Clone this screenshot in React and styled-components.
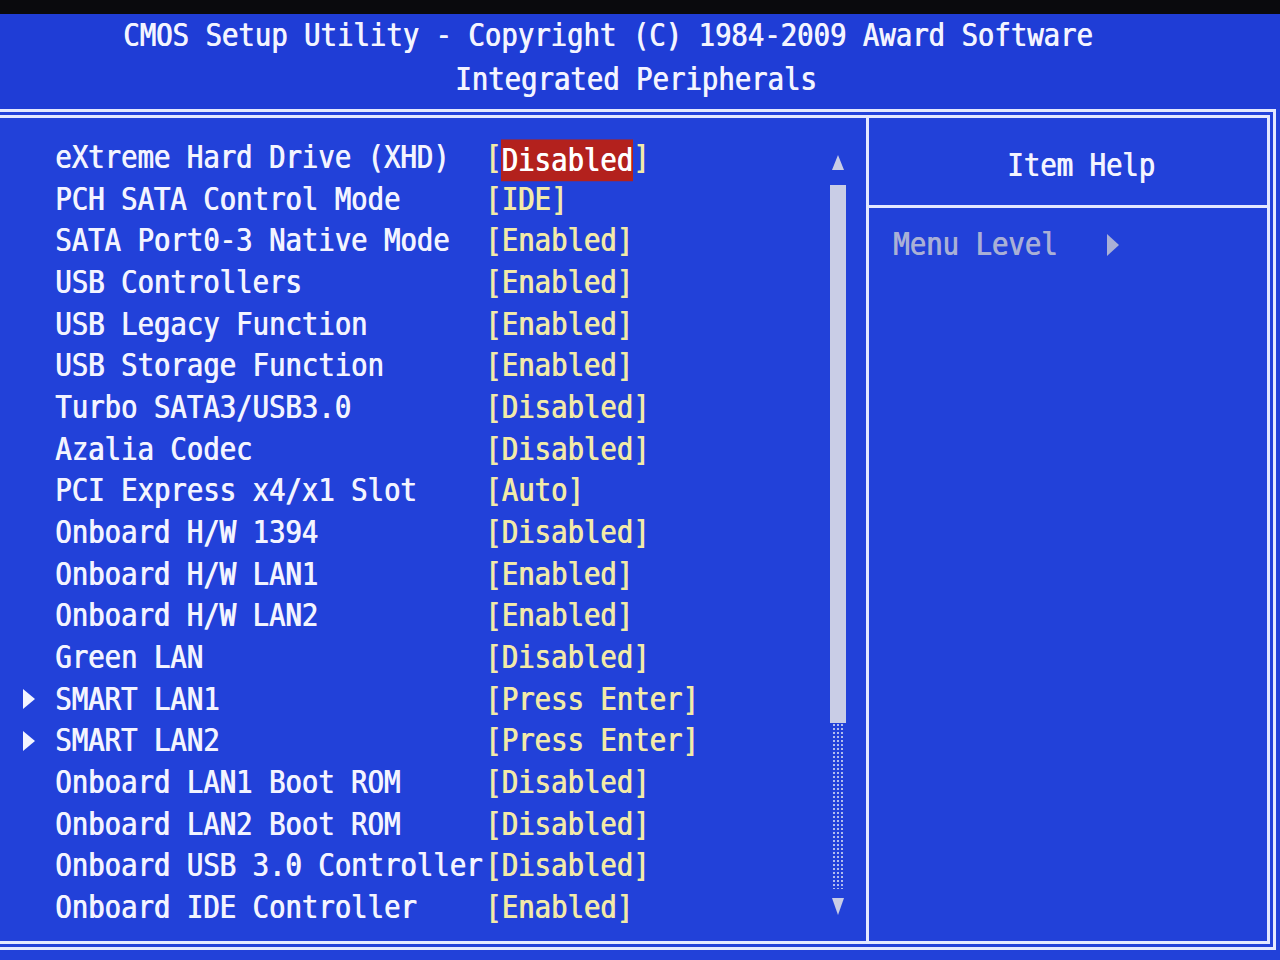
import styled, { createGlobalStyle } from 'styled-components';

const GlobalStyle = createGlobalStyle`
  html, body {
    margin: 0;
    padding: 0;
    background: #050507;
  }
  body {
    font-family: 'DejaVu Sans Mono', 'Liberation Mono', monospace;
  }
`;

const Screen = styled.div`
  width: 1280px;
  height: 960px;
  display: flex;
  flex-direction: column;
  overflow: hidden;
  background: #2241d9;
  font-family: 'DejaVu Sans Mono', 'Liberation Mono', monospace;
  font-size: 27.3px;
  font-weight: normal;
`;

const Bezel = styled.div`
  flex: none;
  height: 14px;
  background: #0a0a0d;
`;

const Header = styled.header`
  flex: none;
  height: 95px;
  display: flex;
  flex-direction: column;
  box-sizing: border-box;
  background: #1f3dd6;
`;

const TitleLine = styled.div`
  height: 44px;
  line-height: 44px;
  padding-left: ${(p) => p.$indent}px;
`;

const Glyphs = styled.span`
  display: inline-block;
  white-space: pre;
  transform: scaleY(1.16);
  color: ${(p) => (p.$tone === 'value' ? '#f2eaa8' : p.$tone === 'dim' ? '#a9b0d6' : '#f3f4ff')};
  text-shadow: 0.8px 0 0 currentColor;
`;

const Frame = styled.main`
  flex: 1;
  display: flex;
  margin-right: 4px;
  margin-bottom: 10px;
  border: 9px double #e4e8ff;
  border-left: none;
`;

const ListPanel = styled.section`
  flex: 0 0 866px;
  display: flex;
  border-right: 3px solid #e4e8ff;
`;

const List = styled.div`
  flex: 1;
  padding-top: 19px;
`;

const Row = styled.div`
  height: 41.67px;
  line-height: 41.67px;
  display: grid;
  grid-template-columns: 55px 430px 1fr;
  align-items: center;
`;

const Pointer = styled.span`
  display: flex;
  align-items: center;
  padding-left: 23px;
`;

const Selected = styled.span`
  display: inline-block;
  height: 36px;
  line-height: 36px;
  vertical-align: middle;
  background: #b3211d;
  color: #ffffff;
`;

const ScrollBar = styled.div`
  flex: 0 0 16px;
  margin-right: 20px;
  padding-top: 37px;
  display: flex;
  flex-direction: column;
  align-items: center;
`;

const Thumb = styled.div`
  width: 16px;
  height: 538px;
  margin-top: 15px;
  background: #c9cde6;
`;

const Track = styled.div`
  width: 12px;
  height: 166px;
  margin-bottom: 9px;
  background-image: radial-gradient(circle, rgba(214, 220, 245, 0.8) 1px, transparent 1.4px);
  background-size: 4px 4px;
`;

const HelpPanel = styled.aside`
  flex: 1;
  display: flex;
  flex-direction: column;
`;

const HelpHeader = styled.div`
  height: 90px;
  display: flex;
  align-items: center;
  justify-content: center;
  box-sizing: border-box;
  border-bottom: 3px solid #e4e8ff;
  padding: 6px 0 0 26px;
`;

const HelpBody = styled.div`
  padding: 16px 0 0 24px;
  line-height: 42px;
  display: flex;
  align-items: center;
`;

const Triangle = ({ dir = 'right', color = '#f3f4ff', w = 12, h = 20 }) => {
  const pts = {
    right: `0,0 ${w},${h / 2} 0,${h}`,
    up: `${w / 2},0 ${w},${h} 0,${h}`,
    down: `0,0 ${w},0 ${w / 2},${h}`,
  }[dir];
  return (
    <svg width={w} height={h} viewBox={`0 0 ${w} ${h}`} style={{ display: 'block' }}>
      <polygon points={pts} fill={color} />
    </svg>
  );
};

const items = [
  { label: 'eXtreme Hard Drive (XHD)', value: 'Disabled', selected: true },
  { label: 'PCH SATA Control Mode', value: 'IDE' },
  { label: 'SATA Port0-3 Native Mode', value: 'Enabled' },
  { label: 'USB Controllers', value: 'Enabled' },
  { label: 'USB Legacy Function', value: 'Enabled' },
  { label: 'USB Storage Function', value: 'Enabled' },
  { label: 'Turbo SATA3/USB3.0', value: 'Disabled' },
  { label: 'Azalia Codec', value: 'Disabled' },
  { label: 'PCI Express x4/x1 Slot', value: 'Auto' },
  { label: 'Onboard H/W 1394', value: 'Disabled' },
  { label: 'Onboard H/W LAN1', value: 'Enabled' },
  { label: 'Onboard H/W LAN2', value: 'Enabled' },
  { label: 'Green LAN', value: 'Disabled' },
  { label: 'SMART LAN1', value: 'Press Enter', submenu: true },
  { label: 'SMART LAN2', value: 'Press Enter', submenu: true },
  { label: 'Onboard LAN1 Boot ROM', value: 'Disabled' },
  { label: 'Onboard LAN2 Boot ROM', value: 'Disabled' },
  { label: 'Onboard USB 3.0 Controller', value: 'Disabled' },
  { label: 'Onboard IDE Controller', value: 'Enabled' },
];

const App = () => (
  <>
    <GlobalStyle />
    <Screen>
      <Bezel />
      <Header>
        <TitleLine $indent={123}>
          <Glyphs>CMOS Setup Utility - Copyright (C) 1984-2009 Award Software</Glyphs>
        </TitleLine>
        <TitleLine $indent={455}>
          <Glyphs>Integrated Peripherals</Glyphs>
        </TitleLine>
      </Header>

      <Frame>
        <ListPanel>
          <List>
            {items.map((item) => (
              <Row key={item.label}>
                <Pointer>{item.submenu && <Triangle />}</Pointer>
                <Glyphs>{item.label}</Glyphs>
                <Glyphs $tone="value">
                  [{item.selected ? <Selected>{item.value}</Selected> : item.value}]
                </Glyphs>
              </Row>
            ))}
          </List>

          <ScrollBar>
            <Triangle dir="up" color="#c9cde6" w={12} h={15} />
            <Thumb />
            <Track />
            <Triangle dir="down" color="#c9cde6" w={12} h={17} />
          </ScrollBar>
        </ListPanel>

        <HelpPanel>
          <HelpHeader>
            <Glyphs>Item Help</Glyphs>
          </HelpHeader>
          <HelpBody>
            <Glyphs $tone="dim">{'Menu Level   '}</Glyphs>
            <Triangle color="#a9b0d6" w={12} h={22} />
          </HelpBody>
        </HelpPanel>
      </Frame>
    </Screen>
  </>
);

export default App;
